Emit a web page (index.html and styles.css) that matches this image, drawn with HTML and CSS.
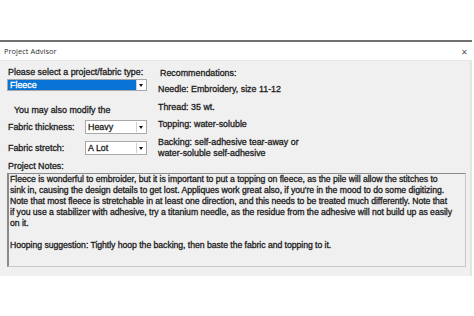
FILE: index.html
```html
<!DOCTYPE html>
<html lang="en">
<head>
  <meta charset="UTF-8">
  <title>Project Advisor</title>
  <link rel="stylesheet" href="styles.css">
</head>
<body>
  <div class="window">
    <div class="titlebar">
      <span>Project Advisor</span>
      <span class="close">&#x2715;</span>
    </div>
    <div class="content">
      <div class="top">
        <div class="left">
          <p class="label">Please select a project/fabric type:</p>
          <div class="select active">
            <span>Fleece</span>
            <span class="arrow"></span>
          </div>
          <p class="hint">You may also modify the</p>
          <div class="row">
            <span class="row-label">Fabric thickness:</span>
            <div class="select small">
              <span>Heavy</span>
              <span class="arrow"></span>
            </div>
          </div>
          <div class="row">
            <span class="row-label">Fabric stretch:</span>
            <div class="select small">
              <span>A Lot</span>
              <span class="arrow"></span>
            </div>
          </div>
        </div>
        <div class="right">
          <p class="rec-title">Recommendations:</p>
          <p>Needle: Embroidery, size 11-12</p>
          <p>Thread: 35 wt.</p>
          <p>Topping: water-soluble</p>
          <p>Backing: self-adhesive tear-away or<br>water-soluble self-adhesive</p>
        </div>
      </div>
      <p class="label notes-label">Project Notes:</p>
      <div class="notes">
        <p>Fleece is wonderful to embroider, but it is important to put a topping on fleece, as the pile will allow the stitches to<br>sink in, causing the design details to get lost. Appliques work great also, if you're in the mood to do some digitizing.<br>Note that most fleece is stretchable in at least one direction, and this needs to be treated much differently. Note that<br>if you use a stabilizer with adhesive, try a titanium needle, as the residue from the adhesive will not build up as easily<br>on it.</p>
        <p>Hooping suggestion: Tightly hoop the backing, then baste the fabric and topping to it.</p>
      </div>
    </div>
  </div>
</body>
</html>
```

FILE: styles.css
```css
* {
  margin: 0;
  padding: 0;
  box-sizing: border-box;
}
body {
  background: #fff;
  font-family: "Liberation Sans", Arial, sans-serif;
  font-size: 8.9px;
  color: #1c1c1c;
  -webkit-text-stroke: 0.3px #1c1c1c;
}
.window {
  margin-top: 40px;
  border-top: 2px solid #707070;
  width: 472px;
}
.titlebar {
  height: 19px;
  background: #fff;
  display: flex;
  justify-content: space-between;
  align-items: center;
  padding: 0 4px 0 4px;
  font-family: "Open Sans", sans-serif;
  font-size: 7.5px;
  color: #333;
  -webkit-text-stroke: 0;
  border-bottom: 1px solid #e8e8e8;
}
.close {
  font-size: 8px;
  color: #555;
}
.content {
  background: #f0f0f0;
  height: 215px;
  padding: 6px 6px 8px 7px;
  border-right: 2px solid #e4e4e4;
}
.top {
  display: flex;
  gap: 11px;
}
.left {
  width: 140px;
}
.label {
  padding-left: 1px;
  line-height: 11px;
}
.select {
  display: flex;
  justify-content: space-between;
  align-items: center;
  height: 12px;
  background: #fff;
  border: 1px solid #a8a8a8;
}
.select span:first-child {
  padding-left: 2px;
}
.select.active {
  margin-top: 1px;
  background: #0a74d6;
  color: #fff;
  -webkit-text-stroke: 0.3px #fff;
}
.arrow {
  width: 10px;
  height: 10px;
  background: #fff;
  border-left: 1px solid #d0d0d0;
  position: relative;
}
.arrow::after {
  content: "";
  position: absolute;
  left: 2px;
  top: 4px;
  border-left: 2.5px solid transparent;
  border-right: 2.5px solid transparent;
  border-top: 3px solid #111;
}
.hint {
  margin: 14px 0 0 7px;
  line-height: 11px;
}
.row {
  display: flex;
  align-items: center;
  margin-top: 4px;
}
.row + .row {
  margin-top: 7px;
}
.row-label {
  width: 78px;
  padding-left: 1px;
}
.select.small {
  width: 62px;
  height: 14px;
}
.right {
  padding-top: 1px;
}
.right p {
  line-height: 11px;
  margin-bottom: 6.5px;
}
.right p:last-child {
  margin-bottom: 0;
}
.right .rec-title {
  padding-left: 2px;
  margin-bottom: 5px;
}
.notes-label {
  margin-top: 2px;
}
.notes {
  margin-top: 1px;
  height: 94px;
  width: 459px;
  border: 1px solid #c8c8c8;
  border-top-color: #8a8a8a;
  border-left: 2px solid #8a8a8a;
  padding: 0 0 0 1px;
  font-size: 8.7px;
  letter-spacing: -0.05px;
  line-height: 11px;
  white-space: nowrap;
  overflow: hidden;
}
.notes p + p {
  margin-top: 11px;
}
```
